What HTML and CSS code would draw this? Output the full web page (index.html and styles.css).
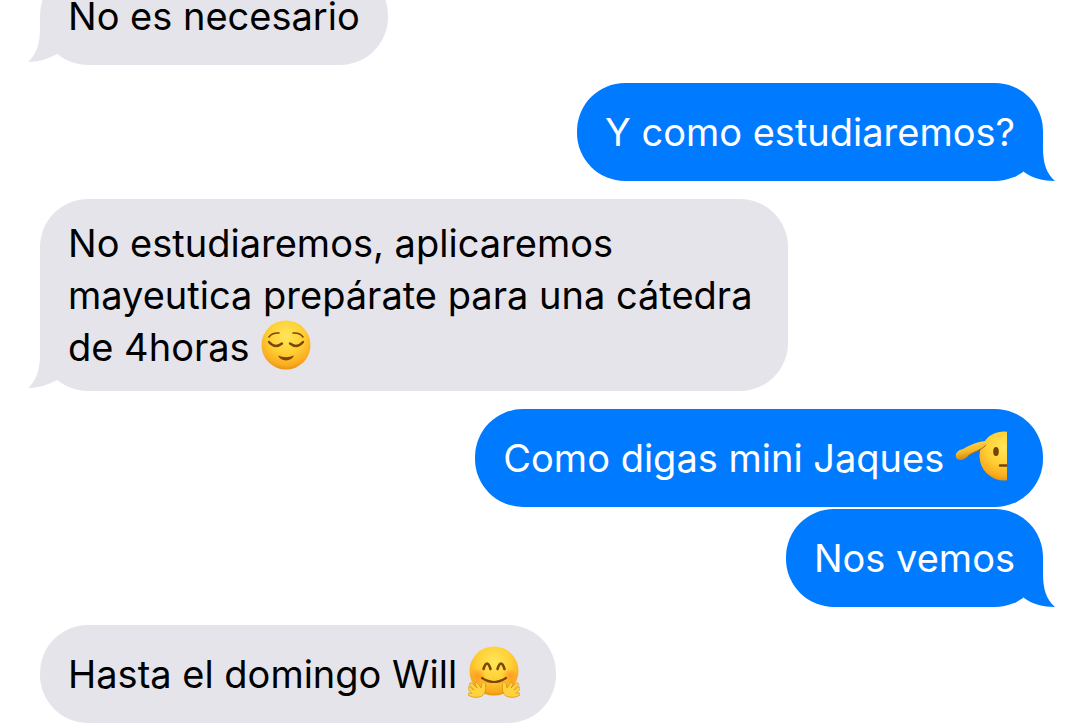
FILE: index.html
```html
<!DOCTYPE html>
<html lang="es">
<head>
    <meta charset="UTF-8">
    <meta name="viewport" content="width=device-width, initial-scale=1.0">
    <title>Mensajes</title>
    <link rel="stylesheet" href="styles.css">
</head>
<body>
    <main class="thread">
        <div class="bubble received">
            <p>No es necesario</p>
            <svg class="tail" viewBox="0 0 32 52" aria-hidden="true"><path d="M12 4V16C12 31 8 42 0 49C10 49 20 46 29 41L32 4Z"/></svg>
        </div>

        <div class="bubble sent">
            <p>Y como estudiaremos?</p>
            <svg class="tail" viewBox="0 0 32 52" aria-hidden="true"><path d="M20 4V18C20 34 23 44 32 52C20 52 9 49 1 43L0 4Z"/></svg>
        </div>

        <div class="bubble received long">
            <p>No estudiaremos, aplicaremos mayeutica prepárate para una cátedra de 4horas
                <svg class="emoji" viewBox="0 0 52 52" role="img" aria-label="Cara aliviada">
                    <defs>
                        <radialGradient id="face" cx="50%" cy="32%" r="70%">
                            <stop offset="0" stop-color="#ffe65a"/>
                            <stop offset="0.5" stop-color="#ffd035"/>
                            <stop offset="0.85" stop-color="#f9ab1e"/>
                            <stop offset="1" stop-color="#e58e12"/>
                        </radialGradient>
                    </defs>
                    <circle cx="26" cy="26" r="24.5" fill="url(#face)"/>
                    <g fill="none" stroke="#7a4708" stroke-width="1.6" stroke-linecap="round">
                        <path d="M9 18Q12 13.5 19 14M33 14Q40 13.5 43 18"/>
                        <path stroke-width="2.4" d="M9 23Q15 30 22 24.5M30 24.5Q37 30 43 23"/>
                    </g>
                    <path d="M18 36.5Q26 40 34 36.5C31 43 21 43 18 36.5Z" fill="#7a4708"/>
                </svg></p>
            <svg class="tail" viewBox="0 0 32 52" aria-hidden="true"><path d="M12 4V16C12 31 8 42 0 49C10 49 20 46 29 41L32 4Z"/></svg>
        </div>

        <div class="bubble sent">
            <p>Como digas mini Jaques
                <svg class="emoji" viewBox="0 0 52 52" role="img" aria-label="Cara saludando">
                    <defs>
                        <linearGradient id="arm" x1="0" y1="0" x2="0.3" y2="1">
                            <stop offset="0" stop-color="#ffe052"/>
                            <stop offset="0.6" stop-color="#f5b82b"/>
                            <stop offset="1" stop-color="#c98312"/>
                        </linearGradient>
                    </defs>
                    <circle cx="49" cy="26" r="24.5" fill="url(#face)"/>
                    <ellipse cx="41" cy="21.5" rx="2.8" ry="4.5" fill="#75430a"/>
                    <path d="M45 35.5H53" stroke="#75430a" stroke-width="2.4" stroke-linecap="round"/>
                    <path d="M31 11C24 11 15 15 8 19C3 20 0 23 1 27C2 31 8 31 12 27C15 23 24 21 31 15C33 13 33 11 31 11Z" fill="url(#arm)"/>
                    <path d="M13 26C17 22 26 21 31 15" fill="none" stroke="#a86f12"/>
                </svg></p>
        </div>

        <div class="bubble sent follows">
            <p>Nos vemos</p>
            <svg class="tail" viewBox="0 0 32 52" aria-hidden="true"><path d="M20 4V18C20 34 23 44 32 52C20 52 9 49 1 43L0 4Z"/></svg>
        </div>

        <div class="bubble received">
            <p>Hasta el domingo Will
                <svg class="emoji" viewBox="0 0 52 52" role="img" aria-label="Cara abrazando">
                    <defs>
                        <radialGradient id="cheek">
                            <stop offset="0" stop-color="#ff8a20" stop-opacity="0.75"/>
                            <stop offset="1" stop-color="#ff8a20" stop-opacity="0"/>
                        </radialGradient>
                    </defs>
                    <circle cx="26" cy="25" r="24.5" fill="url(#face)"/>
                    <circle cx="10" cy="30" r="8" fill="url(#cheek)"/>
                    <circle cx="42" cy="30" r="8" fill="url(#cheek)"/>
                    <g fill="none" stroke="#7a4708" stroke-width="2.6" stroke-linecap="round">
                        <path d="M15.500 23Q19 12 22.500 23M29.500 23Q33 12 36.500 23"/>
                        <path stroke-width="2.2" d="M14 32Q26 40 38 32"/>
                    </g>
                    <g fill="#ffd23e" stroke="#e0921c" stroke-width="0.8" stroke-linejoin="round">
                        <path id="hand" d="M14 37C16 35 18 36 17.500 39C18 45 17 50 11 51C7 52 3 51 0 49C-1 47 1 46.500 4 47.500L0 43C-1 41 1 40 2.500 41.500L6 44L1.500 39C1 37 3 36 4.500 37.500L9 42L7 38C7 36 9 36 10 37.500L13 42Z"/>
                        <use href="#hand" transform="matrix(-1 0 0 1 52 0)"/>
                    </g>
                </svg></p>
        </div>
    </main>
</body>
</html>
```
FILE: styles.css
```css
* {
    box-sizing: border-box;
}

body {
    margin: 0;
    background-color: #fff;
    font-family: Inter, "Liberation Sans", sans-serif;
    font-size: 38px;
    line-height: 52px;
    overflow: hidden;
}

/* the thread is scrolled, so the first bubble starts above the window */
.thread {
    display: flex;
    flex-direction: column;
    gap: 18px;
    margin-top: -33px;
    padding: 0 37px 0 40px;
}

.bubble {
    position: relative;
    max-width: 748px;
    padding: 23px 28px;
    border-radius: 48px;
}

.bubble p {
    margin: 0;
}

.received {
    align-self: flex-start;
    background-color: #e5e4ea;
    color: #000;
}

.sent {
    align-self: flex-end;
    background-color: #007aff;
    color: #fff;
}

.long {
    padding: 18px 28px;
}

.follows {
    margin-top: -16px;
}

.tail {
    position: absolute;
    bottom: 0;
    width: 32px;
    height: 52px;
}

.received .tail {
    left: -12px;
    fill: #e5e4ea;
}

.sent .tail {
    right: -12px;
    fill: #007aff;
}

.emoji {
    width: 52px;
    height: 52px;
    margin: -2px 8px 0 0;
    vertical-align: top;
}
```
